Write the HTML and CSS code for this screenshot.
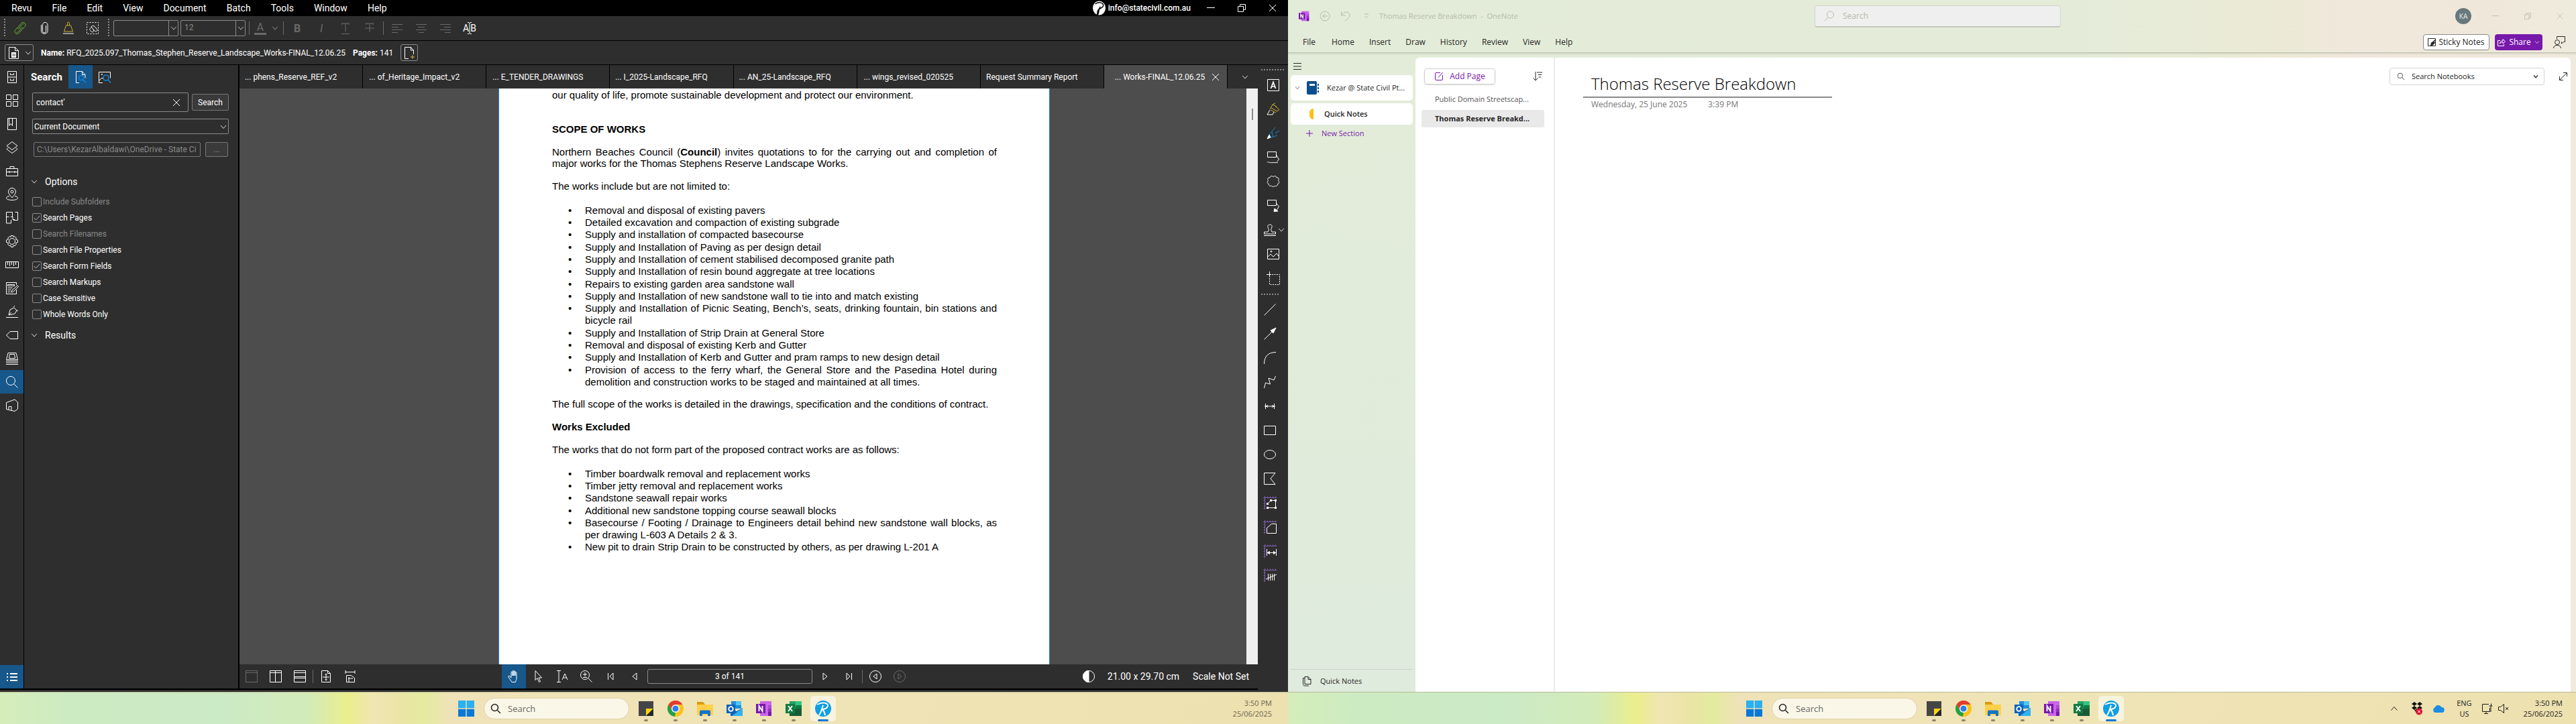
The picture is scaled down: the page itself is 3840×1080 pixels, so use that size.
FILE: index.html
```html
<!DOCTYPE html>
<html lang="en">
<head>
<meta charset="utf-8">
<title>Desktop</title>
<link rel="stylesheet" href="styles.css">
</head>
<body>
<svg class="defs" aria-hidden="true">
  <symbol id="chev" viewBox="0 0 12 12"><path d="M1.500 3.500L6 8.500l4.500-5"/></symbol>
  <symbol id="close" viewBox="0 0 12 12"><path d="M1 1l10 10M11 1L1 11"/></symbol>
  <symbol id="min" viewBox="0 0 12 12"><path d="M0 5.500h12"/></symbol>
  <symbol id="restore" viewBox="0 0 12 12"><path d="M.5 3.500h8v8h-8zM3.500 3.500v-3h8v8h-3"/></symbol>
  <symbol id="link" viewBox="0 0 20 20"><path d="M8 12c-2-2-1-4 0-5l4-4.500c1.500-1.500 3.500-1.500 5 0s1.500 3.500 0 5L14 11M12 8c2 2 1 4 0 5l-4 4.500c-1.500 1.500-3.500 1.500-5 0s-1.500-3.500 0-5L6 9M10.500 9.500c1 1 .8 2-.2 3L6.500 16c-.8.800-1.600.8-2.200.2M9.500 10.500c-1-1-.8-2 .2-3L13.500 4c.8-.8 1.600-.8 2.200-.2"/></symbol>
  <symbol id="clip" viewBox="0 0 20 20"><path d="M12.500 6v8.500a2.500 2.500 0 0 1-5 0V5.500M7.500 5.500C7.500 0 15 0 15 5.500v9c0 5-9.500 5-9.500 0V5"/></symbol>
  <symbol id="weight" viewBox="0 0 20 20"><path d="M6.500 6h7l3 9h-13zM8.500 6V2.500a1.500 1.500 0 0 1 3 0V6"/><path stroke="#fff" d="M2 18h16"/></symbol>
  <symbol id="sellink" viewBox="0 0 20 20"><path stroke-dasharray="2 2" d="M1.500 1.500h17v17h-17z"/><path d="M8 8l5 6c2 2 5 0 3.500-2.500L13 7.500c-2-2-6-.5-5 2M7 10c-2 1-1 3 0 4l1.500 1.500c2 1 4-1 2.500-3"/></symbol>
  <symbol id="underT" viewBox="0 0 20 20"><path d="M5 3h10M10 3v12M4 18.500h12M5 2v3M15 2v3"/></symbol>
  <symbol id="strikeT" viewBox="0 0 20 20"><path d="M5 3h10M10 3v13M3 10h14M5 2v3M15 2v3"/></symbol>
  <symbol id="alL" viewBox="0 0 20 20"><path d="M2 4.500h16M2 8.500h10M2 12.500h16M2 16.500h9"/></symbol>
  <symbol id="alC" viewBox="0 0 20 20"><path d="M2 4.500h16M5 8.500h10M2 12.500h16M6 16.500h8"/></symbol>
  <symbol id="alR" viewBox="0 0 20 20"><path d="M2 4.500h16M8 8.500h10M2 12.500h16M9 16.500h9"/></symbol>
  <symbol id="caret" viewBox="0 0 8 20"><path d="M1 1.500h2l1 1 1-1h2M1 18.500h2l1-1 1 1h2M4 2v16"/></symbol>
  <symbol id="pdf" viewBox="0 0 20 20"><path d="M3.500 1.500h9l5 5v12h-14zM12.500 1.500v5h5"/><path fill="currentColor" stroke="none" d="M7 9h7v8H7z"/><path stroke="#2e2e2e" d="M9.500 11v4M12 11v4"/></symbol>
  <symbol id="addpage" viewBox="0 0 20 20"><path d="M9 18.500H3.500v-17h9l4 4.500v6M12.500 1.500V6h4"/><path stroke="#d9b33c" d="M15 13v6M12 16h6"/></symbol>
  <symbol id="cabinet" viewBox="0 0 20 20"><path d="M3.500 1.500h13v17h-13zM3.500 10h13M7.500 4v2.500h5V4M7.500 12.500V15h5v-2.500"/></symbol>
  <symbol id="tiles" viewBox="0 0 20 20"><path d="M1.500 1.500h7v7h-7zM11.500 1.500h7v7h-7zM1.500 11.500h7v7h-7zM11.500 11.500h7v7h-7z"/></symbol>
  <symbol id="bookmark" viewBox="0 0 20 20"><path d="M3.500 1.500h13v17h-13zM5.500 1.500v11l2.500-3 2.500 3v-11"/></symbol>
  <symbol id="layers" viewBox="0 0 20 20"><path d="M10 1.500l8 6-8 6-8-6zM4 10.500l-2 2 8 6 8-6-2-2"/></symbol>
  <symbol id="toolbox" viewBox="0 0 20 20"><path d="M1.500 6.500h17v11h-17zM1.500 11.500h17M7 6V3.500h6V6M6 10v3M14 10v3"/></symbol>
  <symbol id="place" viewBox="0 0 20 20"><path d="M10 15C7 11 4.500 9 4.500 6a5.500 5.500 0 0 1 11 0c0 3-2.500 5-5.500 9z"/><circle cx="10" cy="6" r="2"/><path d="M6 12.500C-2 14 1 18.500 10 18.500s12-4.500 4-6"/></symbol>
  <symbol id="plan" viewBox="0 0 20 20"><path d="M10.500 1.500h-9v16.500h7v-5M1.500 8.500h4M10.500 1.500v6M8 8.500h3v4h3M14.500 1.500h4v12H12M10.500 8.500v-3"/></symbol>
  <symbol id="gear" viewBox="0 0 20 20"><circle cx="10" cy="10" r="4.500"/><path d="M8.500 1.500h3l.5 2 2-.8 2.300 2.300-.8 2 3 1v3.500l-3 .8.800 2.200-2.300 2.200-2-.7-.5 2.500h-3l-.5-2.500-2 .7-2.300-2.200.8-2.200-3-.8V8l3-1-.8-2L6 2.700l2 .8z"/></symbol>
  <symbol id="ruler" viewBox="0 0 20 20"><path d="M.5 5.500h19v9H.5zM3.500 6v4M6.500 6v6M9.500 6v4M12.500 6v6M15.500 6v4"/></symbol>
  <symbol id="form" viewBox="0 0 20 20"><path d="M16.500 12v6.500h-15v-17h15V5M3.500 4.500h10v2h-10zM3.500 9.500h7M3.500 12.500h5M3.500 15.500h4M9 16l1-3 8-7 1.500 1.500-8 8z"/></symbol>
  <symbol id="sign" viewBox="0 0 20 20"><path d="M1 18.500h18M5 15l2-8 6-3 4 4-3 5zM5 15l4-4M12 3l2-2M17 9l2-1"/></symbol>
  <symbol id="tag" viewBox="0 0 20 20"><path d="M1.500 10L7 4.500h11.500v11H7z"/></symbol>
  <symbol id="stackp" viewBox="0 0 20 20"><path d="M4 1.500h12l2.500 10h-17zM6.500 3.500h7l1 6h-9zM1 13.500h18M1 16h18M1 18.500h18"/></symbol>
  <symbol id="mag" viewBox="0 0 20 20"><circle cx="8" cy="8" r="6.500"/><path d="M12.500 12.500l6 6"/></symbol>
  <symbol id="hex" viewBox="0 0 20 20"><path d="M1.500 5.500L14 1l4.500 4v10L14 18.500l-12.500-3zM5 16v-4.500h4V17"/></symbol>
  <symbol id="list" viewBox="0 0 20 20"><path stroke-width="2" d="M2 5h2M7 5h11M2 10h2M7 10h11M2 15h2M7 15h11"/></symbol>
  <symbol id="docfind" viewBox="0 0 20 20"><path d="M8 18.500H3.500v-17h9l4.500 5v5M12.500 1.500v5h4"/><g stroke="#0f86dc" stroke-width="1.600"><circle cx="11" cy="11" r="3.500"/><path d="M13.500 13.500l4.500 5"/></g></symbol>
  <symbol id="imgfind" viewBox="0 0 20 20"><path d="M7 18.500H1.500v-16h17v9M2 15l4-4 2 2"/><circle cx="6" cy="6" r=".7"/><g stroke="#0f86dc" stroke-width="1.600"><circle cx="12" cy="11" r="4"/><path d="M15 14l4 4.500"/></g></symbol>
  <symbol id="textA" viewBox="0 0 20 20"><path d="M1.500 1.500h17v17h-17z"/><path stroke-width="1.700" d="M6.500 15L10 5.500l3.500 9.500M7.500 12h5"/></symbol>
  <symbol id="hilite" viewBox="0 0 20 20"><g stroke="#cfac32"><path d="M5 10l4-7 6 3M9 3l4-2M7 8l9 5 3-2.500-6-5M6 11l8 4"/></g><path d="M5 11l-4 7h8l2-4"/></symbol>
  <symbol id="pen" viewBox="0 0 20 20"><path stroke="#0f86dc" d="M4 12L13 1M4 12l3 4 9-3M8 8l2 7M13 10l6-4"/><path fill="#fff" d="M4 12l-3 6 5-2z"/></symbol>
  <symbol id="callwave" viewBox="0 0 20 20" ><path d="M1.500 1.500h13v8h-13zM14.500 6l4 7-3 3M1 17.500c2-3 2 1 4 0s2 1 4 0 2 1 4 0 2 1 4 0"/></symbol>
  <symbol id="cloudm" viewBox="0 0 20 20"><path d="M5 4c1-3 3.500-3 5-1 1.500-2 4-2 5 1 3-.5 4 2 2.500 4.500 2 1.500 1.500 4.500-1 5 0 3-2.500 4-4 2.500-1 2-4 2-5 0-2 1.500-4.500 0-4-2.500-2.500-.5-3-3.500-1-5C1 6 2 3.500 5 4z"/></symbol>
  <symbol id="callout" viewBox="0 0 20 20"><path d="M1.500 1.500h13v8h-13zM14.500 6l4 5-3 5"/><path fill="#fff" d="M11 18.500l1-4.500 5 4z"/></symbol>
  <symbol id="stamp" viewBox="0 0 20 20"><path d="M1.500 16v-3h5.500l1.500-3.500C5 3 8 2 10 2s5 1 1.500 7.500L13 13h5.500v3zM1 18.500h18"/></symbol>
  <symbol id="image" viewBox="0 0 20 20"><path d="M1.500 2.500h17v15h-17zM2 14l4-4 4 4 5-5 3 4"/><circle cx="7" cy="6" r="1"/></symbol>
  <symbol id="snap" viewBox="0 0 20 20"><path stroke-dasharray="2 1.500" d="M4.500 4.500h15v15h-15z"/><path d="M4.500 0v7M0 4.500h7"/></symbol>
  <symbol id="line" viewBox="0 0 20 20"><path d="M1.500 18.500l17-17"/></symbol>
  <symbol id="arrow" viewBox="0 0 20 20"><path d="M1.500 18.500L15 5"/><path fill="#fff" d="M11 5l8-4-4 8z"/></symbol>
  <symbol id="arc" viewBox="0 0 20 20"><path d="M1.500 19C1.500 7 8 1.500 19 1.500"/></symbol>
  <symbol id="zig" viewBox="0 0 20 20"><path d="M1.500 19l2-8 7 2L8 4l8 3 2.500-6"/></symbol>
  <symbol id="dim" viewBox="0 0 20 20"><path d="M2 10h16M3.500 6v8M16.500 6v8M3 12l4-4M3 8l4 4M17 12l-4-4M17 8l-4 4"/></symbol>
  <symbol id="rect" viewBox="0 0 20 20"><path d="M1.500 3.500h17v13h-17z"/></symbol>
  <symbol id="oval" viewBox="0 0 20 20"><ellipse cx="10" cy="10" rx="8.500" ry="6.500"/></symbol>
  <symbol id="poly" viewBox="0 0 20 20"><path d="M18 1.500H1.500v17H18L11 10z"/></symbol>
  <symbol id="rul" viewBox="0 0 20 20"><path stroke="#8560b8" d="M2.500 0v20M0 2.500h20M6.500.5v2M10.500.5v2M14.500.5v2M18.500.5v2M.5 6.500h2M.5 10.500h2M.5 14.500h2M.5 18.500h2"/></symbol>
  <symbol id="m1" viewBox="0 0 20 20"><use href="#rul"/><path d="M6.500 11.500l5-5h7v11h-12"/><path fill="#fff" stroke="none" d="M5 10h3v3H5zM10 5h3v3h-3zM17 5h3v3h-3zM17 16h3v3h-3zM5 16h3v3H5z"/></symbol>
  <symbol id="m2" viewBox="0 0 20 20"><use href="#rul"/><path d="M5.500 19.500v-8l7-6h7v14z"/></symbol>
  <symbol id="m3" viewBox="0 0 20 20"><use href="#rul"/><path d="M5.500 7v10M19.500 7v10M6 12.500h13"/><path fill="#fff" d="M6.500 12.500l3-2v4zM18.500 12.500l-3-2v4z"/></symbol>
  <symbol id="m4" viewBox="0 0 20 20"><use href="#rul"/><path d="M7.500 8v10M10.500 8v10M13.500 8v10M16.500 8v10M4 16L20 9"/></symbol>
  <symbol id="pane1" viewBox="0 0 20 20"><path d="M1.500 1.500h17v17h-17zM1.500 4.500h17"/></symbol>
  <symbol id="pane2" viewBox="0 0 20 20"><path d="M1.500 1.500h17v17h-17zM1.500 4.500h17M9.500 1.500v17"/></symbol>
  <symbol id="pane3" viewBox="0 0 20 20"><path d="M1.500 1.500h17v17h-17zM1.500 4.500h17M1.500 10.500h17M1.500 12.500h17"/></symbol>
  <symbol id="fitp" viewBox="0 0 20 20"><path d="M3.500 1.500h9l4 4v13h-13zM12.500 1.500v4h4M10 6v10M5 11h10M8.500 7.500L10 6l1.500 1.500M8.500 14.500L10 16l1.500-1.500"/></symbol>
  <symbol id="fitw" viewBox="0 0 20 20"><path d="M3 1v5M17 1v5M3 3.500h14M4.500 18.500v-10h7l5 4v6zM7 13h7M8 11v7"/></symbol>
  <symbol id="hand" viewBox="0 0 20 20"><path d="M7 18.500L2 11c-1-2 1-2.500 2-1l2 2V4c0-1.500 2-1.500 2 0v5-6.500c0-1.500 2-1.500 2 0V9 3c0-1.500 2-1.500 2 0v6-4.500c0-1.500 2-1.500 2 0V13c0 2-1 3-1.500 5.500z"/></symbol>
  <symbol id="point" viewBox="0 0 20 20"><path d="M6 1.500v14l3-3 2.500 6 2-1-2.500-5.500h4.500z"/></symbol>
  <symbol id="txt" viewBox="0 0 20 20"><path d="M2 1.500h6M2 18.500h6M5 1.500v17M10 15l4-9 4 9M11.500 12h5"/></symbol>
  <symbol id="zoomp" viewBox="0 0 20 20"><circle cx="8" cy="8" r="6.500"/><path d="M12.500 12.500l6 6M5 7h6M8 4v6M5 11.500h6"/></symbol>
  <symbol id="first" viewBox="0 0 20 20"><path d="M6.500 5v10M14 5l-5 5 5 5z"/></symbol>
  <symbol id="prev" viewBox="0 0 20 20"><path d="M13 5l-6 5 6 5z"/></symbol>
  <symbol id="next" viewBox="0 0 20 20"><path d="M7 5l6 5-6 5z"/></symbol>
  <symbol id="last" viewBox="0 0 20 20"><path d="M13.500 5v10M6 5l5 5-5 5z"/></symbol>
  <symbol id="cprev" viewBox="0 0 20 20"><circle cx="10" cy="10" r="8.500"/><path d="M12 6l-5 4 5 4z"/></symbol>
  <symbol id="cnext" viewBox="0 0 20 20"><circle cx="10" cy="10" r="8.500"/><path d="M8 6l5 4-5 4z"/></symbol>
  <symbol id="contrast" viewBox="0 0 20 20"><circle cx="10" cy="10" r="8.500"/><path fill="#fff" d="M10 1.500a8.500 8.500 0 0 0 0 17z"/></symbol>
  <symbol id="acct" viewBox="0 0 20 22"><ellipse cx="10" cy="11" rx="9.500" ry="10.500" fill="#fff" stroke="none"/><path stroke="#000" stroke-width="1.500" d="M4 5c6-4 13-2 12 3-1 4-7 3-8 7l-1 6M8 21c2-4 1-10 4-12"/></symbol>

  <symbol id="win" viewBox="0 0 24 24"><path fill="#2ab0f0" stroke="none" d="M0 0h11.300v11.300H0zM12.700 0H24v11.300H12.700z"/><path fill="#0a78d6" stroke="none" d="M0 12.700h11.300V24H0zM12.700 12.700H24V24H12.700z"/></symbol>
  <symbol id="sticky" viewBox="0 0 24 24"><path fill="#454545" stroke="none" d="M1 1h22v22H1z"/><path fill="#ffd60a" stroke="none" d="M12 12h11l-11 11z"/><path fill="#262626" stroke="none" d="M23 12v11H12z"/></symbol>
  <symbol id="chrome" viewBox="0 0 24 24"><g stroke="none"><circle cx="12" cy="12" r="12" fill="#fbc116"/><path fill="#e33b2e" d="M1.600 6a12 12 0 0 1 20.800 0H12l-5 9z"/><path fill="#22a04b" d="M1.600 6l5.200 9 5.200 3-1 6A12 12 0 0 1 1.600 6z"/><circle cx="12" cy="12" r="6" fill="#fff"/><circle cx="12" cy="12" r="4.600" fill="#2f7de9"/></g></symbol>
  <symbol id="folder" viewBox="0 0 24 24"><g stroke="none"><path fill="#dd9a07" d="M0 2h9l3 4v4H0z"/><path fill="#ffd04a" d="M0 6h24v16H0z"/><path fill="#1374ca" d="M4 23v-6c0-2 1-2.500 2-2.500h12c1 0 2 .5 2 2.500v6h-4v-3H8v3z"/></g></symbol>
  <symbol id="outlook" viewBox="0 0 24 24"><g stroke="none"><path fill="#1f8ee0" d="M7 1h15v11H7z"/><path fill="#4cc7f3" d="M14 1h8v6h-8z"/><path fill="#1068b8" d="M6 11l9 5 9-5v12H6z"/><path fill="#33b2ee" d="M24 11v12H8z"/><path fill="#0c62ba" d="M0 6h13v13H0z"/></g><circle cx="6.500" cy="12.500" r="3.300" fill="none" stroke="#fff" stroke-width="1.800"/></symbol>
  <symbol id="onenote" viewBox="0 0 24 24"><g stroke="none"><path fill="#ca64ea" d="M6 1h17v22H6z"/><path fill="#ae4bd5" d="M18 7h5v5h-5z"/><path fill="#9332bf" d="M18 12h5v5h-5z"/><path fill="#7719aa" d="M18 17h5v6h-5zM0 5h14v14H0z"/></g><path fill="none" stroke="#fff" stroke-width="1.900" d="M4.500 16V8l5 8V8"/></symbol>
  <symbol id="excel" viewBox="0 0 24 24"><g stroke="none"><path fill="#21a366" d="M6 1h9v11H6z"/><path fill="#33c481" d="M15 1h9v6h-9z"/><path fill="#107c41" d="M15 7h9v5h-9zM6 12h9v5H6z"/><path fill="#185c37" d="M6 12h18v11H6z"/><path fill="#107c41" d="M0 5h14v14H0z"/></g><path fill="none" stroke="#fff" stroke-width="1.900" d="M4 8l6 8M10 8l-6 8"/></symbol>
  <symbol id="revu" viewBox="0 0 24 24"><circle cx="12" cy="12" r="12" fill="#0f9fe6" stroke="none"/><path fill="none" stroke="#fff" stroke-width="2" d="M3 6c7-4 17-3 16 2-1 4-6 5-9 5 2 1 4 3 5 9M12 7c-2 5-2 9-6 15"/></symbol>

  <symbol id="burger" viewBox="0 0 14 12"><path d="M1 1.500h12M1 6h12M1 10.500h12"/></symbol>
  <symbol id="back" viewBox="0 0 16 16"><circle cx="8" cy="8" r="7"/><path d="M12 8H4.500M7.500 5l-3 3 3 3"/></symbol>
  <symbol id="undo" viewBox="0 0 16 16"><path d="M1.500 1v6h6M2 6.500C5 2 9 1 12 3c3 2.500 2 6 0 8l-5 4.500"/></symbol>
  <symbol id="drop" viewBox="0 0 8 8"><path d="M1 1h6M1.500 4L4 6.500 6.500 4"/></symbol>
  <symbol id="srch" viewBox="0 0 16 16"><circle cx="9.500" cy="6" r="5"/><path d="M6 10l-5 5"/></symbol>
  <symbol id="srch2" viewBox="0 0 16 16"><circle cx="6.500" cy="6.500" r="5"/><path d="M10.500 10.500l4.500 4.500"/></symbol>
  <symbol id="book" viewBox="0 0 20 20"><g stroke="none"><path fill="#0b4f8c" d="M1 2a2 2 0 0 1 2-2h11a2 2 0 0 1 2 2v16a2 2 0 0 1-2 2H3a2 2 0 0 1-2-2zM17 4h2v3h-2zM17 9h2v3h-2zM17 14h2v3h-2z"/><path fill="#fff" d="M5 4h8v3H5z"/></g></symbol>
  <symbol id="plus" viewBox="0 0 10 10"><path d="M5 0v10M0 5h10"/></symbol>
  <symbol id="edit" viewBox="0 0 14 14"><path d="M9 1.500H3A1.500 1.500 0 0 0 1.500 3v8A1.500 1.500 0 0 0 3 12.500h8a1.500 1.500 0 0 0 1.500-1.500V5M13 1L6 8.500"/></symbol>
  <symbol id="sort" viewBox="0 0 16 16"><path d="M5 1v13M1.500 10.500L5 14l3.500-3.500M7 2h8M8.500 5.500H14M9.500 9H13"/></symbol>
  <symbol id="pages" viewBox="0 0 16 16"><path d="M5 12.500V1.500h5l4 4v7H5M10 1.500v4h4M5 3.500H2.500v9c0 1.500 1 2.500 2 2.500H11"/></symbol>
  <symbol id="snote" viewBox="0 0 12 12"><path d="M.5.500h11v11H.5z"/><path fill="currentColor" stroke="none" d="M4 11l1.500-5H11v-2L4 11zM5 7l6-5v5l-4 4H4z"/></symbol>
  <symbol id="share" viewBox="0 0 12 12"><path d="M4 3.500H.5v8h9V9M3.500 8c.5-3 2-4 4.500-4V1.500L11.500 5 8 8V6C6 6 5 6.500 3.500 8z"/></symbol>
  <symbol id="person" viewBox="0 0 18 18"><circle cx="6" cy="9" r="3.500"/><path d="M.5 18c0-6 11-6 11 0M5.500 4V.5h12v8h-2l-3 2.500V8.500"/></symbol>
  <symbol id="expand" viewBox="0 0 12 12"><path d="M1 11L11 1M6 .5h5.500V6M.5 6v5.500H6"/></symbol>
  <symbol id="dropbox" viewBox="0 0 16 20"><g stroke="none"><path d="M4 0l4 3-4 3-4-3zM12 0l4 3-4 3-4-3zM4 6l4 3-4 3-4-3zM12 6l4 3-4 3-4-3zM8 10l4 3-4 3-4-3z"/><circle cx="11" cy="14.500" r="5" fill="#d8122d"/></g><path stroke="#fff" d="M9 12.500l4 4M13 12.500l-4 4"/></symbol>
  <symbol id="cloud" viewBox="0 0 18 14"><path fill="#1a8de4" stroke="none" d="M4 13a4 4 0 0 1-.5-7.500A5.500 5.500 0 0 1 13.500 5 4 4 0 0 1 14 13z"/></symbol>
  <symbol id="monitor" viewBox="0 0 18 18"><path d="M11 2.500H1.500v11h11V8M7 13.500v3M4 16.500h6M14.500 1.500v4M11.500 5h5M14 5v9"/></symbol>
  <symbol id="mute" viewBox="0 0 18 18"><path d="M1.500 6.500h3l5-4v13l-5-4h-3zM12 7l4 4M16 7l-4 4"/></symbol>
</svg>

<main class="desk">
  <section class="screen">
    <div class="revu">
      <header class="r-menu">
        <nav><button>Revu</button><button>File</button><button>Edit</button><button>View</button><button>Document</button><button>Batch</button><button>Tools</button><button>Window</button><button>Help</button></nav>
        <div class="r-user"><svg class="acct"><use href="#acct"/></svg>info@statecivil.com.au</div>
        <div class="r-win"><button aria-label="Minimise"><svg class="i12"><use href="#min"/></svg></button><button aria-label="Restore"><svg class="i12"><use href="#restore"/></svg></button><button aria-label="Close"><svg class="i12"><use href="#close"/></svg></button></div>
      </header>

      <div class="r-tools">
        <i class="grip"></i>
        <button class="green" aria-label="Hyperlink"><svg><use href="#link"/></svg></button><button aria-label="Attach"><svg><use href="#clip"/></svg></button><button class="gold" aria-label="Flatten"><svg><use href="#weight"/></svg></button><button aria-label="Select links"><svg><use href="#sellink"/></svg></button>
        <i class="grip grip-2"></i>
        <div class="combo"><input aria-label="Font" value=""><span><svg class="i10"><use href="#chev"/></svg></span></div>
        <div class="combo"><input aria-label="Font size" value="12"><span><svg class="i10"><use href="#chev"/></svg></span></div>
        <i class="sep"></i>
        <button class="dim colour" aria-label="Font colour"><b>A</b><svg class="i10"><use href="#chev"/></svg></button>
        <i class="sep"></i>
        <button class="dim bold">B</button><button class="dim ital">I</button><button class="dim" aria-label="Underline"><svg><use href="#underT"/></svg></button><button class="dim" aria-label="Strikethrough"><svg><use href="#strikeT"/></svg></button>
        <i class="sep"></i>
        <button class="dim" aria-label="Align left"><svg><use href="#alL"/></svg></button><button class="dim" aria-label="Align centre"><svg><use href="#alC"/></svg></button><button class="dim" aria-label="Align right"><svg><use href="#alR"/></svg></button>
        <button class="ab">A<svg><use href="#caret"/></svg>B</button>
      </div>

      <div class="r-name">
        <button class="box wide" aria-label="Document type"><svg><use href="#pdf"/></svg><svg class="i10"><use href="#chev"/></svg></button>
        <span><b>Name:</b> RFQ_2025.097_Thomas_Stephen_Reserve_Landscape_Works-FINAL_12.06.25</span>
        <span><b>Pages:</b> 141</span>
        <button class="box" aria-label="Add page"><svg><use href="#addpage"/></svg></button>
      </div>

      <div class="r-body">
        <nav class="rail">
          <button aria-label="File access"><svg><use href="#cabinet"/></svg></button><button aria-label="Thumbnails"><svg><use href="#tiles"/></svg></button><button aria-label="Bookmarks"><svg><use href="#bookmark"/></svg></button><button aria-label="Layers"><svg><use href="#layers"/></svg></button><button aria-label="Tool chest"><svg><use href="#toolbox"/></svg></button><button aria-label="Places"><svg><use href="#place"/></svg></button><button aria-label="Spaces"><svg><use href="#plan"/></svg></button><button aria-label="Properties"><svg><use href="#gear"/></svg></button><button aria-label="Measurements"><svg><use href="#ruler"/></svg></button><button aria-label="Forms"><svg><use href="#form"/></svg></button><button aria-label="Signatures"><svg><use href="#sign"/></svg></button><button aria-label="Tags"><svg><use href="#tag"/></svg></button><button aria-label="Sets"><svg><use href="#stackp"/></svg></button><button class="on" aria-label="Search"><svg><use href="#mag"/></svg></button><button aria-label="Studio"><svg><use href="#hex"/></svg></button>
          <button class="on end" aria-label="Markups list"><svg><use href="#list"/></svg></button>
        </nav>

        <aside class="panel">
          <div class="p-head"><h2>Search</h2><button class="on" aria-label="Search text"><svg><use href="#docfind"/></svg></button><button aria-label="Search visual"><svg><use href="#imgfind"/></svg></button></div>
          <form class="p-form">
            <div class="row"><div class="term"><input aria-label="Search term" value="contact'"><button type="button" aria-label="Clear"><svg class="i12"><use href="#close"/></svg></button></div><button type="button" class="btn">Search</button></div>
            <select aria-label="Scope"><option>Current Document</option></select>
            <div class="row path"><input aria-label="Folder" disabled value="C:\Users\KezarAlbaldawi\OneDrive - State Ci"><button type="button" class="btn more">...</button></div>
          </form>
          <button class="fold"><svg class="i10"><use href="#chev"/></svg>Options</button>
          <div class="opts">
            <label class="off"><input type="checkbox" disabled>Include Subfolders</label>
            <label><input type="checkbox" checked>Search Pages</label>
            <label class="off"><input type="checkbox" disabled>Search Filenames</label>
            <label><input type="checkbox">Search File Properties</label>
            <label><input type="checkbox" checked>Search Form Fields</label>
            <label><input type="checkbox">Search Markups</label>
            <label><input type="checkbox">Case Sensitive</label>
            <label><input type="checkbox">Whole Words Only</label>
          </div>
          <button class="fold"><svg class="i10"><use href="#chev"/></svg>Results</button>
        </aside>

        <div class="work">
          <div class="tabs">
            <button><span>... phens_Reserve_REF_v2</span></button><button><span>... of_Heritage_Impact_v2</span></button><button><span>... E_TENDER_DRAWINGS</span></button><button><span>... I_2025-Landscape_RFQ</span></button><button><span>... AN_25-Landscape_RFQ</span></button><button><span>... wings_revised_020525</span></button><button><span>Request Summary Report</span></button><button class="cur"><span>... Works-FINAL_12.06.25</span><svg class="i12"><use href="#close"/></svg></button>
            <button class="over" aria-label="More tabs"><svg class="i10"><use href="#chev"/></svg></button>
          </div>
          <div class="view">
            <article class="page">
              <p>our quality of life, promote sustainable development and protect our environment.</p>
              <h1>SCOPE OF WORKS</h1>
              <p>Northern Beaches Council (<b>Council</b>) invites quotations to for the carrying out and completion of major works for the Thomas Stephens Reserve Landscape Works.</p>
              <p>The works include but are not limited to:</p>
              <ul>
                <li>Removal and disposal of existing pavers</li>
                <li>Detailed excavation and compaction of existing subgrade</li>
                <li>Supply and installation of compacted basecourse</li>
                <li>Supply and Installation of Paving as per design detail</li>
                <li>Supply and Installation of cement stabilised decomposed granite path</li>
                <li>Supply and Installation of resin bound aggregate at tree locations</li>
                <li>Repairs to existing garden area sandstone wall</li>
                <li>Supply and Installation of new sandstone wall to tie into and match existing</li>
                <li>Supply and Installation of Picnic Seating, Bench’s, seats, drinking fountain, bin stations and bicycle rail</li>
                <li>Supply and Installation of Strip Drain at General Store</li>
                <li>Removal and disposal of existing Kerb and Gutter</li>
                <li>Supply and Installation of Kerb and Gutter and pram ramps to new design detail</li>
                <li>Provision of access to the ferry wharf, the General Store and the Pasedina Hotel during demolition and construction works to be staged and maintained at all times.</li>
              </ul>
              <p>The full scope of the works is detailed in the drawings, specification and the conditions of contract.</p>
              <h2>Works Excluded</h2>
              <p>The works that do not form part of the proposed contract works are as follows:</p>
              <ul>
                <li>Timber boardwalk removal and replacement works</li>
                <li>Timber jetty removal and replacement works</li>
                <li>Sandstone seawall repair works</li>
                <li>Additional new sandstone topping course seawall blocks</li>
                <li>Basecourse / Footing / Drainage to Engineers detail behind new sandstone wall blocks, as per drawing L-603 A Details 2 &amp; 3.</li>
                <li>New pit to drain Strip Drain to be constructed by others, as per drawing L-201 A</li>
              </ul>
            </article>
            <div class="scroll"><i></i></div>
          </div>
          <div class="status">
            <button class="dim" aria-label="Single view"><svg><use href="#pane1"/></svg></button><button aria-label="Split vertical"><svg><use href="#pane2"/></svg></button><button aria-label="Split horizontal"><svg><use href="#pane3"/></svg></button><i class="sep"></i><button aria-label="Fit page"><svg><use href="#fitp"/></svg></button><button aria-label="Fit width"><svg><use href="#fitw"/></svg></button>
            <i class="sp1"></i>
            <button class="on" aria-label="Pan"><svg><use href="#hand"/></svg></button><button aria-label="Select"><svg><use href="#point"/></svg></button><button aria-label="Select text"><svg><use href="#txt"/></svg></button><button aria-label="Zoom"><svg><use href="#zoomp"/></svg></button><button aria-label="First page"><svg><use href="#first"/></svg></button><button aria-label="Previous page"><svg><use href="#prev"/></svg></button>
            <input aria-label="Page" value="3 of 141">
            <button aria-label="Next page"><svg><use href="#next"/></svg></button><button aria-label="Last page"><svg><use href="#last"/></svg></button><i class="sep"></i><button aria-label="Previous view"><svg><use href="#cprev"/></svg></button><button class="dim" aria-label="Next view"><svg><use href="#cnext"/></svg></button>
            <i class="sp2"></i>
            <button aria-label="Dimmer"><svg><use href="#contrast"/></svg></button><span class="size">21.00 x 29.70 cm</span><span>Scale Not Set</span>
          </div>
        </div>

        <div class="dock">
          <i class="hgrip"></i>
          <button aria-label="Text box"><svg><use href="#textA"/></svg></button><button aria-label="Highlight"><svg><use href="#hilite"/></svg></button><button aria-label="Pen"><svg><use href="#pen"/></svg></button><button aria-label="Cloud callout"><svg><use href="#callwave"/></svg></button><button aria-label="Cloud"><svg><use href="#cloudm"/></svg></button><button aria-label="Callout"><svg><use href="#callout"/></svg></button><button class="drop" aria-label="Stamp"><svg><use href="#stamp"/></svg><svg class="i10"><use href="#chev"/></svg></button><button aria-label="Image"><svg><use href="#image"/></svg></button><button aria-label="Snapshot"><svg><use href="#snap"/></svg></button>
          <i class="hgrip short"></i>
          <div class="shapes">
            <button aria-label="Line"><svg><use href="#line"/></svg></button><button aria-label="Arrow"><svg><use href="#arrow"/></svg></button><button aria-label="Arc"><svg><use href="#arc"/></svg></button><button aria-label="Polyline"><svg><use href="#zig"/></svg></button><button aria-label="Dimension"><svg><use href="#dim"/></svg></button><button aria-label="Rectangle"><svg><use href="#rect"/></svg></button><button aria-label="Ellipse"><svg><use href="#oval"/></svg></button><button aria-label="Polygon"><svg><use href="#poly"/></svg></button><button aria-label="Perimeter"><svg><use href="#m1"/></svg></button><button aria-label="Area"><svg><use href="#m2"/></svg></button><button aria-label="Length"><svg><use href="#m3"/></svg></button><button aria-label="Count"><svg><use href="#m4"/></svg></button>
          </div>
        </div>
      </div>
    </div>

    <footer class="taskbar">
      <div class="apps">
        <button class="start" aria-label="Start"><svg><use href="#win"/></svg></button>
        <label class="find"><svg><use href="#srch2"/></svg><input placeholder="Search" aria-label="Search"></label>
        <button aria-label="Sticky Notes"><svg><use href="#sticky"/></svg></button><button aria-label="Chrome"><svg><use href="#chrome"/></svg></button><button aria-label="Files"><svg><use href="#folder"/></svg></button><button aria-label="Outlook"><svg><use href="#outlook"/></svg></button><button aria-label="OneNote"><svg><use href="#onenote"/></svg></button><button aria-label="Excel"><svg><use href="#excel"/></svg></button><button class="cur" aria-label="Revu"><svg><use href="#revu"/></svg></button>
      </div>
      <div class="tray soft"><time>3:50 PM<br>25/06/2025</time></div>
    </footer>
  </section>

  <section class="screen">
    <div class="note">
      <header class="n-title">
        <svg class="i16"><use href="#onenote"/></svg><svg class="i16"><use href="#back"/></svg><svg class="i16"><use href="#undo"/></svg><svg class="i8"><use href="#drop"/></svg>
        <span>Thomas Reserve Breakdown &nbsp;-&nbsp; OneNote</span>
        <label class="n-find"><svg class="i16"><use href="#srch"/></svg><input placeholder="Search" aria-label="Search"></label>
        <b class="avatar">KA</b>
        <div class="n-win"><button aria-label="Minimise"><svg class="i10"><use href="#min"/></svg></button><button aria-label="Restore"><svg class="i10"><use href="#restore"/></svg></button><button aria-label="Close"><svg class="i10"><use href="#close"/></svg></button></div>
      </header>
      <div class="n-menu">
        <nav><button>File</button><button>Home</button><button>Insert</button><button>Draw</button><button>History</button><button>Review</button><button>View</button><button>Help</button></nav>
        <button class="stick"><svg class="i12"><use href="#snote"/></svg>Sticky Notes</button>
        <button class="share"><svg class="i12"><use href="#share"/></svg>Share<svg class="i8"><use href="#chev"/></svg></button>
        <button class="person" aria-label="Feedback"><svg><use href="#person"/></svg></button>
      </div>
      <div class="n-body">
        <aside class="side">
          <button class="burger" aria-label="Menu"><svg><use href="#burger"/></svg></button>
          <button class="nb"><svg class="i8"><use href="#chev"/></svg><svg class="bk"><use href="#book"/></svg>Kezar @ State Civil Pt...</button>
          <button class="sec"><i></i>Quick Notes</button>
          <button class="new"><svg class="i10"><use href="#plus"/></svg>New Section</button>
          <button class="quick"><svg class="i16"><use href="#pages"/></svg>Quick Notes</button>
        </aside>
        <div class="sheet">
          <div class="list">
            <div class="l-head"><button class="add"><svg class="i14"><use href="#edit"/></svg>Add Page</button><button aria-label="Sort"><svg class="i16"><use href="#sort"/></svg></button></div>
            <a href="#">Public Domain Streetscap...</a>
            <a href="#" class="cur">Thomas Reserve Breakd...</a>
          </div>
          <article class="canvas">
            <h1>Thomas Reserve Breakdown</h1>
            <p><span>Wednesday, 25 June 2025</span><span>3:39 PM</span></p>
          </article>
          <div class="c-tools">
            <label><svg class="i12"><use href="#srch2"/></svg><input placeholder="Search Notebooks" aria-label="Search Notebooks"><svg class="i8"><use href="#chev"/></svg></label>
            <button aria-label="Full page"><svg class="i12"><use href="#expand"/></svg></button>
          </div>
        </div>
      </div>
    </div>

    <footer class="taskbar">
      <div class="apps">
        <button class="start" aria-label="Start"><svg><use href="#win"/></svg></button>
        <label class="find"><svg><use href="#srch2"/></svg><input placeholder="Search" aria-label="Search"></label>
        <button aria-label="Sticky Notes"><svg><use href="#sticky"/></svg></button><button aria-label="Chrome"><svg><use href="#chrome"/></svg></button><button aria-label="Files"><svg><use href="#folder"/></svg></button><button aria-label="Outlook"><svg><use href="#outlook"/></svg></button><button aria-label="OneNote"><svg><use href="#onenote"/></svg></button><button aria-label="Excel"><svg><use href="#excel"/></svg></button><button class="cur" aria-label="Revu"><svg><use href="#revu"/></svg></button>
      </div>
      <div class="tray">
        <svg class="i12 up"><use href="#chev"/></svg><svg class="dbx"><use href="#dropbox"/></svg><svg class="cld"><use href="#cloud"/></svg>
        <span class="lang">ENG<br>US</span>
        <svg class="i18"><use href="#monitor"/></svg><svg class="i18"><use href="#mute"/></svg>
        <time>3:50 PM<br>25/06/2025</time>
      </div>
    </footer>
  </section>
</main>
</body>
</html>
```

FILE: styles.css
```css
* { box-sizing: border-box; }
body { margin: 0; font-family: Roboto, "Liberation Sans", sans-serif; font-size: 12px; }
.defs { position: absolute; width: 0; height: 0; }
button, input, select { font: inherit; color: inherit; margin: 0; padding: 0; border: 0; background: none; }
button { display: flex; align-items: center; justify-content: center; white-space: nowrap; }
h1, h2, p, ul { margin: 0; }
svg { display: block; flex: none; width: 20px; height: 20px; fill: none; stroke: currentColor; }
.i8 { width: 8px; height: 8px; }
.i10 { width: 10px; height: 10px; }
.i12 { width: 12px; height: 12px; }
.i14 { width: 14px; height: 14px; }
.i16 { width: 16px; height: 16px; }
.i18 { width: 18px; height: 18px; }

.desk { display: grid; grid-template-columns: 1fr 1fr; height: 100vh; overflow: hidden; }
.screen { display: flex; flex-direction: column; min-width: 0; min-height: 0; }

/* ---------- PDF editor ---------- */
.revu { flex: 1; min-height: 0; display: flex; flex-direction: column; background: #2e2e2e; color: #fff; padding-bottom: 3px; }
.on { background: #17578a; }
.dim { color: #6a6a6a; }

.r-menu { display: flex; align-items: center; height: 24px; background: #000; font-size: 14px; }
.r-menu nav { display: flex; flex: 1; padding-left: 2px; }
.r-menu nav button { padding: 0 15px; }
.r-user { display: flex; align-items: center; gap: 3px; font-size: 12px; font-weight: 500; }
.acct { width: 21px; height: 22px; }
.r-win { display: flex; padding-left: 7px; }
.r-win button { width: 46px; height: 24px; }

.r-tools { display: flex; align-items: center; height: 37px; border-bottom: 1px solid #000; padding-left: 6px; }
.r-tools > button { width: 36px; height: 36px; }
.grip { width: 2px; height: 28px; margin-right: 4px; background: repeating-linear-gradient(#8a8a8a 0 2px, transparent 2px 4px); }
.grip-2 { margin: 0 6px 0 5px; }
.green { color: #69b52d; }
.gold { color: #cfac32; }
.combo { display: flex; width: 97px; height: 24px; margin-right: 3px; border: 1px solid #8a8a8a; border-radius: 2px; color: #8a8a8a; }
.combo input { flex: 1; min-width: 0; padding: 0 5px 2px; }
.combo span { display: grid; place-items: center; width: 14px; border-left: 1px solid #8a8a8a; color: #ddd; }
.sep { width: 1px; height: 20px; margin: 0 2px; background: #6a6a6a; }
.r-tools .colour { width: 46px; gap: 8px; }
.colour b { width: 18px; border-bottom: 3px solid #6a6a6a; font-size: 16px; font-weight: 400; line-height: 16px; }
.colour svg { color: #aaa; }
.bold { font-size: 16px; font-weight: 700; }
.ital { font-size: 16px; font-style: italic; }
.ab { font-size: 14px; }
.ab svg { width: 8px; height: 20px; margin: 0 -3px; }

.r-name { display: flex; align-items: center; gap: 11px; height: 36px; border-bottom: 1px solid #000; padding-left: 7px; }
.r-name b { font-weight: 700; }
.box { width: 26px; height: 25px; border: 1px solid #8a8a8a; border-radius: 3px; }
.box.wide { width: 43px; gap: 7px; }

.r-body { flex: 1; min-height: 0; display: flex; }
.rail { display: flex; flex-direction: column; width: 36px; border-right: 1px solid #000; border-bottom: 2px solid #000; }
.rail button { height: 35px; width: 35px; }
.rail .end { margin-top: auto; }

.panel { width: 321px; border-right: 2px solid #000; border-bottom: 2px solid #000; }
.p-head { display: flex; align-items: center; height: 35px; padding-left: 10px; }
.p-head h2 { width: 56px; font-size: 15px; font-weight: 700; }
.p-head button { width: 36px; height: 35px; }
.p-form { padding: 6px 14px 0 12px; }
.row { display: flex; align-items: center; gap: 5px; }
.term { display: flex; flex: 1; height: 29px; border: 1px solid #8a8a8a; border-radius: 2px; }
.term input { flex: 1; min-width: 0; padding-left: 5px; }
.term button { width: 34px; }
.btn { width: 55px; height: 25px; border: 1px solid #777; border-radius: 2px; background: #3a3a3a; }
.p-form select { display: block; width: 100%; height: 23px; margin: 10px 0 12px; padding-left: 2px; border: 1px solid #8a8a8a; border-radius: 2px; appearance: none; background: url("data:image/svg+xml,%3Csvg xmlns='http://www.w3.org/2000/svg' width='10' height='10' fill='none' stroke='%23ddd'%3E%3Cpath d='M1 3l4 4.500L9 3'/%3E%3C/svg%3E") right 2px center no-repeat; }
.path { gap: 7px; padding: 0 1px 0 2px; color: #8a8a8a; }
.path input { flex: 1; min-width: 0; height: 22px; padding: 0 4px; border: 1px solid #777; border-radius: 2px; }
.more { width: 34px; height: 22px; }
.fold { gap: 11px; height: 24px; padding-left: 10px; font-size: 14px; }
.p-form + .fold { margin-top: 25px; }
.opts { padding: 6px 0 7px 12px; }
.opts label { display: flex; align-items: center; gap: 2px; height: 24px; }
.opts input { width: 14px; height: 14px; appearance: none; border: 1px solid #8a8a8a; border-radius: 2px; }
.opts input:checked { background: url("data:image/svg+xml,%3Csvg xmlns='http://www.w3.org/2000/svg' width='12' height='12' fill='none' stroke='%23bbb'%3E%3Cpath d='M1.500 6l3 3L10 3'/%3E%3C/svg%3E"); }
.off { color: #8a8a8a; }

.work { flex: 1; min-width: 0; display: flex; flex-direction: column; border-bottom: 2px solid #000; }
.tabs { display: flex; height: 35px; }
.tabs button { flex: 1; min-width: 0; border-right: 1px solid #000; }
.tabs span { flex: 1; padding-right: 30px; text-align: center; }
.tabs .cur { background: #4d4d4d; }
.tabs .cur span { padding-left: 12px; padding-right: 6px; }
.tabs .cur svg { margin-right: 11px; }
.tabs .over { flex: 0 0 45px; border: 0; padding-left: 6px; }

.view { flex: 1; min-height: 0; display: grid; grid-template-columns: 386fr 822px 293fr 17px; overflow: hidden; background: #4d4d4d; }
.page { grid-column: 2; display: flex; flex-direction: column; gap: 17px; padding: 1px 78px 0 79px; border: solid #1684cc; border-width: 0 1px; background: #fff; color: #000; font: 15px/17px "Liberation Sans", Arial, sans-serif; text-align: justify; }
.page h1, .page h2 { font-size: 15px; line-height: 17px; }
.page h1 { margin-top: 17px; }
.page ul { margin: 2px 0 -2px; padding-left: 24px; line-height: 18px; list-style: none; }
.page li { display: grid; grid-template-columns: 25px 1fr; }
.page li::before { content: "•"; }
.page li:nth-child(3n) { margin-bottom: 1px; }
.scroll { grid-column: 4; padding: 30px 0 0 8px; background: #f0f0f0; }
.scroll i { display: block; width: 2px; height: 17px; background: #8a8a8a; }

.status { display: flex; align-items: center; height: 36px; padding-right: 13px; font-size: 14px; }
.status button { width: 36px; height: 36px; }
.status .sep { margin: 0 1px; }
.status input { width: 246px; height: 22px; margin: 0 1px; border: 1px solid #8a8a8a; border-radius: 3px; text-align: center; font-size: 12px; }
.sp1 { flex: 11; }
.sp2 { flex: 13; }
.size { margin: 0 20px 0 10px; }

.dock { width: 45px; display: flex; flex-direction: column; align-items: center; padding-top: 6px; }
.hgrip { flex: none; width: 36px; height: 2px; margin-bottom: 4px; background: repeating-linear-gradient(90deg, #8a8a8a 0 2px, transparent 2px 4px); }
.dock button { flex: none; width: 45px; height: 36px; }
.dock .drop { gap: 2px; padding-left: 2px; }
.dock .short { width: 26px; margin: 5px 9px 4px 0; }
.shapes { padding-right: 10px; }
.dock .shapes button { width: 35px; }

/* ---------- taskbar ---------- */
.taskbar { display: grid; grid-template-columns: 1fr auto 1fr; align-items: center; height: 48px; border-top: 1px solid #b9b897; font-family: "Open Sans", "Noto Sans", sans-serif; background: linear-gradient(90deg, #d5edb9 0, #cdebc2 5%, #cbeac6 17%, #d3ebb8 24%, #ebee8c 27%, #f0e5b4 29%, #ebe4a6 31%, #e3eb9f 33%, #efe2b8 35%, #efe4b6 60%, #eee1b0 100%); }
.apps { grid-column: 2; display: flex; align-items: center; padding-left: 6px; }
.apps button { position: relative; width: 44px; height: 46px; }
.apps button svg { width: 24px; height: 24px; }
.apps .start { width: 36px; margin-right: 8px; }
.apps button:not(.start)::after { content: ""; position: absolute; bottom: 4px; width: 6px; height: 3px; border-radius: 2px; background: #8a856c; }
.apps .cur::before { content: ""; position: absolute; inset: 4px 3px; border-radius: 5px; background: #f8f3dd; }
.apps .cur svg { position: relative; }
.apps .cur:not(.start)::after { width: 16px; background: #0a78d6; }
.find { display: flex; align-items: center; gap: 10px; width: 217px; height: 32px; margin-right: 3px; padding-left: 9px; border: 1px solid #ddd3aa; border-radius: 16px; background: #fbf7e8; font-size: 13px; color: #222; }
.find svg { width: 16px; height: 16px; stroke-width: 1.500; }
.find input { width: 120px; }
input::placeholder { color: inherit; opacity: 1; }
.find input::placeholder { color: #666; }
.tray { justify-self: end; display: flex; align-items: center; padding-right: 20px; font-size: 11px; line-height: 16px; color: #1c1c1c; }
.tray time { margin-left: 21px; text-align: right; }
.soft { padding-right: 24px; color: #6c664f; }
.up { transform: rotate(180deg); }
.dbx { width: 16px; height: 20px; margin: 0 15px 0 20px; fill: #111; }
.cld { width: 18px; height: 14px; margin-right: 18px; }
.lang { margin-right: 14px; text-align: center; }
.tray .i18 + .i18 { margin-left: 6px; }

/* ---------- notes ---------- */
.note { flex: 1; min-height: 0; display: flex; flex-direction: column; font: 11px/16px "Open Sans", "Noto Sans", sans-serif; color: #262626; background: linear-gradient(90deg, #e3ecd8 0, #e4ecd9 62%, #ebead6 76%, #f1e8dc 83%, #efe8da 93%, #efebdc 100%); }
.n-title { display: flex; align-items: center; height: 48px; padding-left: 16px; color: #b5bba9; }
.n-title > svg { margin-right: 15px; }
.n-title > .i8 { margin: 0 15px 0 4px; }
.n-title > span { width: 649px; }
.n-find { display: flex; align-items: center; gap: 12px; width: 367px; height: 33px; padding-left: 13px; border: 1px solid #d2d7c8; border-bottom: 2px solid #c3c8ba; border-radius: 4px; background: #efefef; }
.n-find input { width: 200px; font-size: 12px; }
.avatar { display: grid; place-items: center; width: 24px; height: 24px; margin-left: auto; border-radius: 50%; background: #68797d; color: #e8eeee; font-size: 10px; font-weight: 400; }
.n-win { display: flex; padding-left: 12px; }
.n-win button { width: 48px; height: 24px; }
.n-menu { display: flex; align-items: center; height: 31px; padding: 0 16px 0 11px; border-bottom: 1px solid #bfc7b3; box-shadow: 0 1px 2px #0002; font-size: 12px; }
.n-menu nav { display: flex; flex: 1; }
.n-menu nav button { padding: 0 11px; }
.n-menu nav button:first-child { margin-right: 2px; }
.stick { gap: 4px; width: 99px; height: 24px; border: 1px solid #8a8a8a; border-radius: 4px; background: #fff; }
.share { gap: 5px; width: 71px; height: 24px; margin: 0 16px 0 8px; border-radius: 4px; background: #7719aa; color: #fff; }
.person svg { width: 18px; height: 18px; }

.n-body { flex: 1; min-height: 0; display: flex; padding: 7px 8px 0 0; }
.side { display: flex; flex-direction: column; width: 190px; padding: 0 4px; background: linear-gradient(#e3ecd800, #dfebdc 90%); }
.side button { justify-content: flex-start; border-radius: 5px; }
.burger { height: 26px; padding-left: 3px; }
.burger svg { width: 14px; height: 12px; }
.nb { height: 38px; padding-left: 8px; background: #fff; }
.bk { margin: 0 11px 0 9px; }
.side .nb { padding-left: 6px; }
.sec { height: 32px; margin-top: 4px; padding-left: 28px; gap: 16px; background: #fff; font-weight: 600; }
.sec i { width: 6px; height: 16px; border-radius: 6px 0 0 6px; background: #fdbf12; }
.new { height: 26px; padding-left: 23px; gap: 13px; color: #7719aa; }
.side .quick { height: 34px; margin-top: auto; padding-left: 16px; gap: 12px; border-top: 1px solid #cdd3cd; border-radius: 0; }

.sheet { flex: 1; min-width: 0; display: flex; border-radius: 6px 6px 0 0; background: #fff; }
.list { width: 208px; padding: 16px 14px 0 9px; border-right: 2px solid #ececec; }
.l-head { display: flex; justify-content: space-between; align-items: center; padding: 0 2px 0 4px; margin-bottom: 9px; }
.add { gap: 9px; width: 106px; height: 24px; border: 1px solid #cfcfcf; border-radius: 4px; box-shadow: 0 1px 2px #0002; color: #7719aa; font-size: 12px; }
.list a { display: flex; align-items: center; height: 26px; margin-bottom: 3px; padding-left: 20px; border-radius: 3px; color: #555; text-decoration: none; white-space: nowrap; }
.list .cur { background: #e9e9e9; color: #262626; font-weight: 700; }
.canvas { flex: 1; padding: 20px 0 0 42px; }
.canvas h1 { width: 371px; height: 40px; padding-left: 12px; border-bottom: 2px solid #8a8a8a; font-size: 24px; font-weight: 300; line-height: 38px; color: #000; white-space: nowrap; }
.canvas p { display: flex; gap: 31px; padding: 2px 12px; font-size: 12px; color: #767676; }
.c-tools { display: flex; align-items: flex-start; gap: 22px; padding: 15px 5px 0 0; }
.c-tools label { display: flex; align-items: center; width: 231px; height: 26px; padding: 0 8px 0 10px; border: 1px solid #d4d4d4; border-radius: 4px; }
.c-tools input { flex: 1; min-width: 0; padding-left: 10px; }
.c-tools .i8 { stroke-width: 2; }
.c-tools button { height: 26px; }
```
